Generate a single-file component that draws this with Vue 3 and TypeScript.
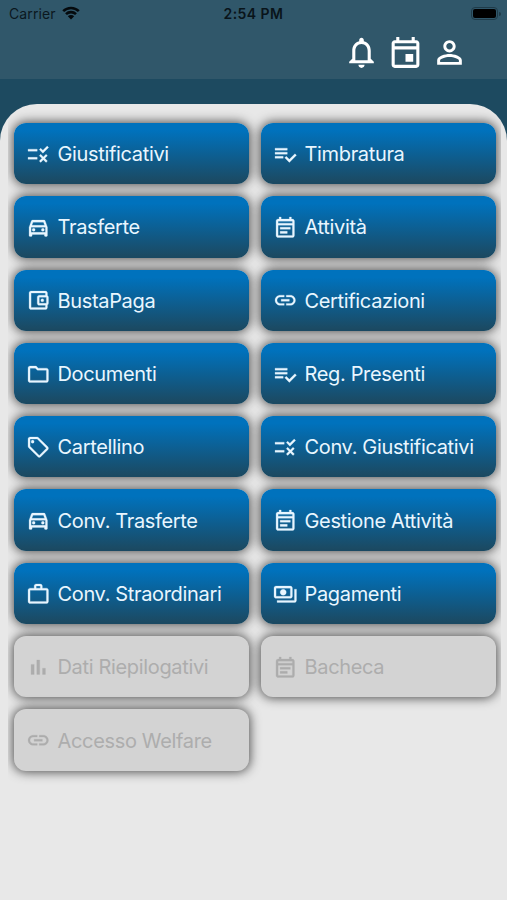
<script setup lang="ts">
interface MenuItem {
  label: string
  icon: string
  disabled?: boolean
}

const icons: Record<string, string> = {
  rule: 'M16.54 11L13 7.46l1.41-1.41 2.12 2.12 4.24-4.24 1.41 1.41L16.54 11zM11 7H2v2h9V7zm10 6.41L19.59 12 17 14.59 14.41 12 13 13.41 15.59 16 13 18.59 14.41 20 17 17.41 19.59 20 21 18.59 18.41 16 21 13.41zM11 15H2v2h9v-2z',
  check: 'M14 10H2v2h12v-2zm0-4H2v2h12V6zM2 16h8v-2H2v2zm19.5-4.5L23 13l-6.99 7-4.51-4.5L13 14l3.01 3 5.49-5.5z',
  car: 'M18.92 6.01C18.72 5.42 18.16 5 17.5 5h-11c-.66 0-1.21.42-1.42 1.01L3 12v8c0 .55.45 1 1 1h1c.55 0 1-.45 1-1v-1h12v1c0 .55.45 1 1 1h1c.55 0 1-.45 1-1v-8l-2.08-5.99zM6.85 7h10.29l1.08 3.11H5.77L6.85 7zM19 17H5v-5h14v5zM7.5 13a1.5 1.5 0 1 0 0 3a1.5 1.5 0 1 0 0-3zM16.5 13a1.5 1.5 0 1 0 0 3a1.5 1.5 0 1 0 0-3z',
  note: 'M19 4h-1V2h-2v2H8V2H6v2H5c-1.11 0-1.99.9-1.99 2L3 20c0 1.1.89 2 2 2h14c1.1 0 2-.9 2-2V6c0-1.1-.9-2-2-2zm0 16H5V10h14v10zm0-12H5V6h14v2zM7 12h10v2H7zm0 4h7v2H7z',
  wallet: 'M21 7.28V5c0-1.1-.9-2-2-2H5c-1.11 0-2 .9-2 2v14c0 1.1.89 2 2 2h14c1.1 0 2-.9 2-2v-2.28c.59-.35 1-.98 1-1.72V9c0-.74-.41-1.38-1-1.72zM20 9v6h-7V9h7zM5 19V5h14v2h-6c-1.1 0-2 .9-2 2v6c0 1.1.9 2 2 2h6v2H5zM16 10.5a1.5 1.5 0 1 0 0 3a1.5 1.5 0 1 0 0-3z',
  link: 'M3.9 12c0-1.71 1.39-3.1 3.1-3.1h4V7H7c-2.76 0-5 2.24-5 5s2.24 5 5 5h4v-1.9H7c-1.71 0-3.1-1.39-3.1-3.1zM8 13h8v-2H8v2zm9-6h-4v1.9h4c1.71 0 3.1 1.39 3.1 3.1s-1.39 3.1-3.1 3.1h-4V17h4c2.76 0 5-2.24 5-5s-2.24-5-5-5z',
  folder: 'M9.17 6l2 2H20v10H4V6h5.17M10 4H4c-1.1 0-1.99.9-1.99 2L2 18c0 1.1.9 2 2 2h16c1.1 0 2-.9 2-2V8c0-1.1-.9-2-2-2h-8l-2-2z',
  tag: 'M21.41 11.58l-9-9C12.05 2.22 11.55 2 11 2H4c-1.1 0-2 .9-2 2v7c0 .55.22 1.05.59 1.42l9 9c.36.36.86.58 1.41.58s1.05-.22 1.41-.59l7-7c.37-.36.59-.86.59-1.41s-.23-1.06-.59-1.42zM13 20.01L4 11V4h7v-.01l9 9-7 7.02zM6.5 5a1.5 1.5 0 1 0 0 3a1.5 1.5 0 1 0 0-3z',
  work: 'M14 6V4h-4v2h4zM4 8v11h16V8H4zm16-2c1.11 0 2 .89 2 2v11c0 1.11-.89 2-2 2H4c-1.11 0-2-.89-2-2l.01-11c0-1.11.88-2 1.99-2h4V4c0-1.11.89-2 2-2h4c1.11 0 2 .89 2 2v2h4z',
  payments: 'M19 14V6c0-1.1-.9-2-2-2H3c-1.1 0-2 .9-2 2v8c0 1.1.9 2 2 2h14c1.1 0 2-.9 2-2zm-2 0H3V6h14v8zm-7-7c-1.66 0-3 1.34-3 3s1.34 3 3 3 3-1.34 3-3-1.34-3-3-3zm13 0v11c0 1.1-.9 2-2 2H4v-2h17V7h2z',
  chart: 'M5 9.2h3V19H5zM10.6 5h2.8v14h-2.8zM16.2 13H19v6h-2.8z',
  bell: 'M12 22c1.1 0 2-.9 2-2h-4c0 1.1.9 2 2 2zm6-6v-5c0-3.07-1.63-5.64-4.5-6.32V4c0-.83-.67-1.5-1.5-1.5s-1.5.67-1.5 1.5v.68C7.64 5.36 6 7.92 6 11v5l-2 2v1h16v-1l-2-2zm-2 1H8v-6c0-2.48 1.51-4.5 4-4.5s4 2.02 4 4.5v6z',
  event: 'M19 4h-1V2h-2v2H8V2H6v2H5c-1.11 0-1.99.9-1.99 2L3 20c0 1.1.89 2 2 2h14c1.1 0 2-.9 2-2V6c0-1.1-.9-2-2-2zm0 16H5V10h14v10zm0-12H5V6h14v2zM12 13h5v5h-5z',
  person: 'M12 5.9c1.16 0 2.1.94 2.1 2.1s-.94 2.1-2.1 2.1S9.9 9.16 9.9 8s.94-2.1 2.1-2.1m0 9c2.97 0 6.1 1.46 6.1 2.1v1.1H5.9V17c0-.64 3.13-2.1 6.1-2.1M12 4C9.79 4 8 5.79 8 8s1.79 4 4 4 4-1.79 4-4-1.79-4-4-4zm0 9c-2.67 0-8 1.34-8 4v3h16v-3c0-2.66-5.33-4-8-4z',
}

const items: MenuItem[] = [
  { label: 'Giustificativi', icon: 'rule' },
  { label: 'Timbratura', icon: 'check' },
  { label: 'Trasferte', icon: 'car' },
  { label: 'Attività', icon: 'note' },
  { label: 'BustaPaga', icon: 'wallet' },
  { label: 'Certificazioni', icon: 'link' },
  { label: 'Documenti', icon: 'folder' },
  { label: 'Reg. Presenti', icon: 'check' },
  { label: 'Cartellino', icon: 'tag' },
  { label: 'Conv. Giustificativi', icon: 'rule' },
  { label: 'Conv. Trasferte', icon: 'car' },
  { label: 'Gestione Attività', icon: 'note' },
  { label: 'Conv. Straordinari', icon: 'work' },
  { label: 'Pagamenti', icon: 'payments' },
  { label: 'Dati Riepilogativi', icon: 'chart', disabled: true },
  { label: 'Bacheca', icon: 'note', disabled: true },
  { label: 'Accesso Welfare', icon: 'link', disabled: true },
]

const actions = ['bell', 'event', 'person']
</script>

<template>
  <div class="screen">
    <header class="header">
      <div class="status">
        <div class="carrier">
          <span>Carrier</span>
          <svg class="wifi" viewBox="0 0 18 14">
            <path d="M1.2 5.1a11.2 11.2 0 0 1 15.6 0M4 8.1a7.2 7.2 0 0 1 10 0" />
            <path class="dot" d="M9 13.5L5.8 10.3a4.6 4.6 0 0 1 6.4 0z" />
          </svg>
        </div>
        <span class="time">2:54 PM</span>
        <div class="power">
          <span class="battery"><span class="charge"></span></span>
          <span class="cap"></span>
        </div>
      </div>
      <nav class="actions">
        <svg v-for="name in actions" :key="name" viewBox="0 0 24 24"><path :d="icons[name]" /></svg>
      </nav>
    </header>
    <main class="sheet">
      <div class="grid">
        <button
          v-for="item in items"
          :key="item.label"
          class="tile"
          :class="{ disabled: item.disabled }"
          :disabled="item.disabled"
        >
          <svg class="icon" viewBox="0 0 24 24"><path :d="icons[item.icon]" /></svg>
          <span class="label">{{ item.label }}</span>
        </button>
      </div>
    </main>
  </div>
</template>

<style>
body {
  margin: 0;
}
</style>

<style scoped>
.screen {
  box-sizing: border-box;
  display: flex;
  flex-direction: column;
  width: 507px;
  height: 900px;
  overflow: hidden;
  background: #1d4a60;
  font-family: Inter, 'Liberation Sans', sans-serif;
}
.header {
  flex: none;
  height: 79px;
  background: #30576a;
}
.status {
  display: grid;
  grid-template-columns: 1fr auto 1fr;
  align-items: center;
  height: 27px;
  padding: 0 6px 0 9px;
  font-size: 14px;
  color: #0b171e;
}
.carrier {
  display: flex;
  align-items: center;
  gap: 6px;
  letter-spacing: 0.1px;
}
.wifi {
  width: 18px;
  height: 14px;
  margin-bottom: 2px;
  fill: none;
  stroke: #050a0d;
  stroke-width: 2.6;
}
.wifi .dot {
  fill: #050a0d;
  stroke: none;
}
.time {
  margin-right: 3px;
  font-weight: 600;
  letter-spacing: 0.45px;
  color: #09141a;
}
.power {
  display: flex;
  align-items: center;
  justify-content: flex-end;
  gap: 1px;
}
.battery {
  box-sizing: border-box;
  width: 27px;
  height: 13px;
  padding: 1px;
  border: 1px solid #1f3b49;
  border-radius: 4px;
}
.charge {
  display: block;
  height: 9px;
  border-radius: 2px;
  background: #000;
}
.cap {
  width: 2px;
  height: 4px;
  border-radius: 0 2px 2px 0;
  background: #1f3b49;
}
.actions {
  display: flex;
  justify-content: flex-end;
  gap: 7px;
  padding: 6.5px 39px 0 0;
}
.actions svg {
  width: 37px;
  height: 37px;
  fill: #fff;
}
.sheet {
  flex: 1;
  margin-top: 24.5px;
  padding: 0 6.5px 0 8px;
  border-radius: 37px 37px 0 0;
  background: #e8e8e8;
  overflow: hidden;
}
.grid {
  box-sizing: border-box;
  display: grid;
  grid-template-columns: 235px 235px;
  grid-auto-rows: 61.3px;
  gap: 12px;
  height: 100%;
  padding: 19.5px 4px 0 6px;
  overflow: hidden;
}
.tile {
  display: flex;
  align-items: center;
  gap: 7px;
  margin: 0;
  padding: 1px 0 0 12px;
  border: 0;
  border-radius: 12px;
  background: linear-gradient(#0072bd 12%, #1b4a63 96%);
  box-shadow: 0 0 11px 1px rgba(0, 0, 0, 0.68);
  color: #e9f6ff;
  font: inherit;
  font-size: 20px;
  white-space: nowrap;
}
.icon {
  flex: none;
  width: 24.5px;
  height: 24.5px;
  fill: currentColor;
  stroke: currentColor;
  stroke-width: 0.25;
}
.label {
  letter-spacing: -0.34px;
}
.disabled {
  background: #d3d3d3;
  color: #adadad;
}
</style>
